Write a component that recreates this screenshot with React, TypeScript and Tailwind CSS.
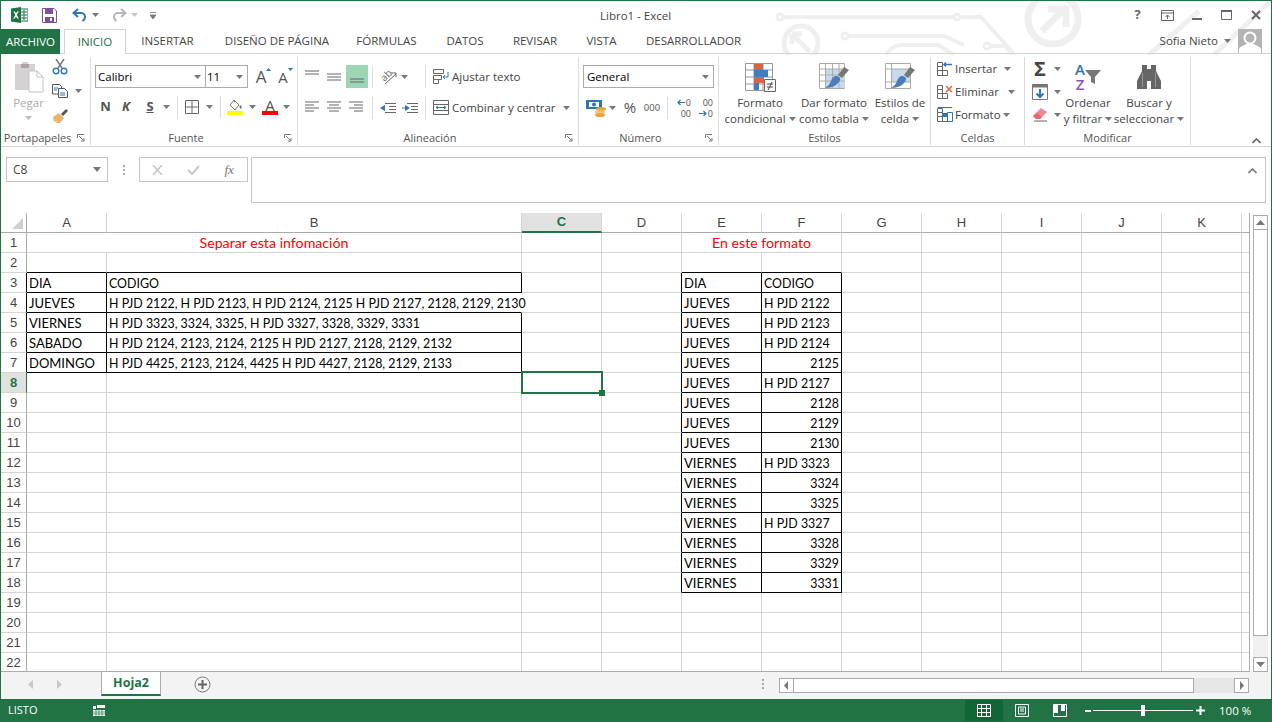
import type { ReactNode } from "react";

function Caret({ className = "" }: { className?: string }) {
  return (
    <svg width="7" height="4" viewBox="0 0 7 4" className={`inline-block shrink-0 ${className}`}>
      <path d="M0 0h7L3.5 4z" fill="#777" />
    </svg>
  );
}

function Launcher() {
  return (
    <svg width="8" height="8" viewBox="0 0 8 8" className="absolute right-[5px] bottom-[3px]">
      <path d="M.5 4V.5H7M2 2l4.5 4.5M4 7h3V4" fill="none" stroke="#777" />
    </svg>
  );
}

function Group({ w, label, launcher, children }: { w: string; label: string; launcher?: boolean; children: ReactNode }) {
  return (
    <div className={`relative flex h-[88px] shrink-0 flex-col border-r border-[#dcdcdc] ${w}`}>
      <div className="h-[72px]">{children}</div>
      <div className={`mt-px h-[15px] text-center text-[11px] leading-[16px] text-[#555] ${launcher ? "pr-[16px]" : ""}`}>{label}</div>
      {launcher && <Launcher />}
    </div>
  );
}

function VDivider() {
  return <div className="h-[22px] w-px shrink-0 bg-[#dcdcdc]" />;
}

function Lines({ kind }: { kind: "top" | "middle" | "bottom" | "left" | "center" | "right" }) {
  const paths = {
    top: "M0 1h14M0 4h14",
    middle: "M0 4h14M0 7h14M0 10h14",
    bottom: "M1 9h14M1 12h14",
    left: "M0 1h14M0 4h9M0 7h14M0 10h9",
    center: "M0 1h14M2 4h10M0 7h14M2 10h10",
    right: "M0 1h14M5 4h9M0 7h14M5 10h9",
  };
  return (
    <svg width="16" height="14" viewBox="0 0 16 14">
      <path d={paths[kind]} stroke="#666" fill="none" />
    </svg>
  );
}

function ExcelLogo() {
  return (
    <svg width="17" height="16" viewBox="0 0 17 16">
      <rect x="7" y="2" width="10" height="12" fill="#fff" stroke="#217346" />
      <path d="M10 5h6M10 8h6M10 11h6M13 3v10" stroke="#217346" />
      <path d="M0 1.5 10 0v16L0 14.5z" fill="#217346" />
      <path d="m2.5 4.5 1.8 3.4-2 3.6h1.6L5 9.3l1.1 2.2h1.7l-2-3.7 1.9-3.3H6.200L5 6.600 3.900 4.500z" fill="#fff" />
    </svg>
  );
}

function SaveIcon() {
  return (
    <svg width="15" height="15" viewBox="0 0 15 15">
      <path d="M.5.5h11.500l2.500 2.500v11.500H.5z" fill="#fff" stroke="#7d4f9d" />
      <path d="M3 1h8v5H3zM3 9h9v6H3z" fill="#7d4f9d" />
      <path d="M8 10h2v3H8z" fill="#fff" />
    </svg>
  );
}

function UndoIcon({ color, flip }: { color: string; flip?: boolean }) {
  return (
    <svg width="15" height="14" viewBox="0 0 15 14" className={flip ? "-scale-x-100" : ""}>
      <path d="M6 1 1.500 5 6 9" fill="none" stroke={color} strokeWidth="2" />
      <path d="M2 5h7.500a3.800 3.800 0 0 1 3.500 4c0 2-1 3-2.500 4" fill="none" stroke={color} strokeWidth="2" />
    </svg>
  );
}

function Circuit() {
  return (
    <svg width="1272" height="54" viewBox="0 0 1272 54" className="pointer-events-none absolute left-0 top-0" fill="none" stroke="#efefef" strokeWidth="4">
      <circle cx="779" cy="16" r="3" strokeWidth="3" />
      <path d="M783 16h172" />
      <circle cx="956" cy="16" r="3" strokeWidth="3" />
      <path d="M960 16h20l34 38" />
      <circle cx="844" cy="35" r="3" strokeWidth="3" />
      <path d="M848 35h95l20 9" />
      <circle cx="986" cy="45" r="3" strokeWidth="3" />
      <path d="M990 45h14l8 9" />
      <path d="M885 54q6-10 16-10h36l16 10" />
      <circle cx="800" cy="42" r="17" strokeWidth="5" />
      <path d="M791 33l18 18M791 33h10M791 33v10" strokeWidth="5" />
      <circle cx="1052" cy="18" r="25" strokeWidth="7" />
      <path d="M1041 30l24-24M1047 8h18v18" strokeWidth="7" />
      <path d="M1148 54l50-44M1213 54l59-56" strokeWidth="5" />
    </svg>
  );
}

function TitleBar() {
  return (
    <div className="relative flex h-[28px] items-center">
      <div className="ml-[10px] flex"><ExcelLogo /></div>
      <div className="ml-[14px] flex"><SaveIcon /></div>
      <div className="ml-[15px] flex"><UndoIcon color="#2e75b5" /></div>
      <Caret className="ml-[5px]" />
      <div className="ml-[13px] flex"><UndoIcon color="#b5b5b5" flip /></div>
      <Caret className="ml-[4px] opacity-40" />
      <svg width="6" height="7" viewBox="0 0 6 7" className="ml-[12px]">
        <path d="M0 .5h6M0 3h6L3 7z" stroke="#777" strokeWidth=".8" fill="#777" />
      </svg>
      <div className="absolute left-[599px] top-[7px] text-[11.500px] leading-[15px] text-[#444]">Libro1 - Excel</div>
      <div className="absolute right-0 top-0 flex h-[28px] items-center text-[#666]">
        <div className="w-[29px] text-center text-[13px] font-bold">?</div>
        <div className="flex w-[30px] justify-center">
          <svg width="13" height="11" viewBox="0 0 13 11">
            <path d="M.5.5h12v10H.5zM.5 3h12M6.500 9V5M4.500 7l2-2 2 2" fill="none" stroke="#666" />
          </svg>
        </div>
        <div className="flex w-[29px] justify-center"><div className="mt-[7px] h-[2px] w-[10px] bg-[#666]" /></div>
        <div className="flex w-[30px] justify-center">
          <svg width="11" height="10" viewBox="0 0 11 10"><path d="M.5 1h10v8.500H.5z" fill="none" stroke="#666" strokeWidth="1" /><path d="M0 0h11v2H0z" fill="#666" /></svg>
        </div>
        <div className="flex w-[29px] justify-center">
          <svg width="10" height="10" viewBox="0 0 10 10"><path d="m1 1 8 8M9 1 1 9" stroke="#666" strokeWidth="2" /></svg>
        </div>
        <div className="w-[1px]" />
      </div>
    </div>
  );
}

const tabs: [string, string][] = [
  ["INSERTAR", "w-[83px]"],
  ["DISEÑO DE PÁGINA", "w-[136px]"],
  ["FÓRMULAS", "w-[83px]"],
  ["DATOS", "w-[74px]"],
  ["REVISAR", "w-[66px]"],
  ["VISTA", "w-[67px]"],
  ["DESARROLLADOR", "w-[117px]"],
];

function TabRow() {
  return (
    <div className="relative flex h-[25px] border-b border-[#d4d4d4] text-[11.500px]">
      <div className="flex h-[25px] w-[59px] items-center justify-center bg-[#217346] text-white">ARCHIVO</div>
      <div className="ml-[4px] flex h-[25px] w-[62px] items-center justify-center border border-b-0 border-[#d4d4d4] bg-white text-[#217346]">INICIO</div>
      {tabs.map(([name, w]) => (
        <div key={name} className={`relative flex h-[24px] items-center justify-center whitespace-nowrap text-[#444] ${w}`}>{name}</div>
      ))}
      <div className="absolute right-[9px] top-0 flex h-[24px] items-center">
        <span className="text-[#444]">Sofia Nieto</span>
        <Caret className="ml-[6px] mr-[7px]" />
        <div className="h-[24px] w-[24px] overflow-hidden bg-[#b3b3b3]">
          <svg width="24" height="24" viewBox="0 0 24 24">
            <circle cx="12" cy="9" r="5.500" fill="#b3b3b3" stroke="#fff" strokeWidth="2" />
            <path d="M1 24v-4c0-2 6-4 7-5h8c1 1 7 3 7 5v4z" fill="#fff" />
          </svg>
        </div>
      </div>
    </div>
  );
}

function Portapapeles() {
  return (
    <Group w="w-[90px]" label="Portapapeles" launcher>
      <div className="flex h-full">
        <div className="-mr-[4px] flex w-[55px] flex-col items-center pt-[4px] text-[#a8a8a8]">
          <svg width="30" height="32" viewBox="0 0 30 32">
            <path d="M1 3h7V1h6v2h7v26H1z" fill="#d6d2d3" />
            <path d="M7 3h8v4H7z" fill="#aaa6a7" />
            <path d="M15 10h8l6 6v15H15z" fill="#fff" stroke="#c2c2c2" />
            <path d="M23 10v6h6" fill="none" stroke="#c2c2c2" />
          </svg>
          <div className="mt-[2px] text-[11.500px] leading-[16px]">Pegar</div>
          <Caret className="mt-[5px] opacity-50" />
        </div>
        <div className="flex flex-col gap-1">
          <div className="flex h-5 items-center">
            <svg width="16" height="16" viewBox="0 0 16 16">
              <path d="m4 0 6 9M12 0 6 9" stroke="#777" strokeWidth="1.500" />
              <circle cx="4" cy="12" r="2.800" fill="none" stroke="#2e75b5" strokeWidth="1.400" />
              <circle cx="12" cy="12" r="2.800" fill="none" stroke="#2e75b5" strokeWidth="1.400" />
            </svg>
          </div>
          <div className="flex h-5 items-center">
            <svg width="16" height="14" viewBox="0 0 16 14">
              <path d="M.5.5h7l2 2V10H.5z" fill="#fff" stroke="#555" />
              <path d="M6.500 4.500h6l3 3v6h-9z" fill="#fff" stroke="#555" />
              <path d="M2 4h4M2 6h3M8 9h5M8 11h5" stroke="#2e75b5" />
            </svg>
            <Caret className="ml-[7px]" />
          </div>
          <div className="flex h-5 items-center">
            <svg width="16" height="15" viewBox="0 0 16 15">
              <path d="m9 6 5-5 2 2-5 5z" fill="#555" />
              <path d="m1 9 6-4 5 5-4 5H4l1-2-3 1z" fill="#e7b66c" />
            </svg>
          </div>
        </div>
      </div>
    </Group>
  );
}

function Fuente() {
  const box = "flex h-[23px] items-center justify-between border border-[#ababab] bg-white text-[11.500px] text-black";
  return (
    <Group w="w-[207px]" label="Fuente" launcher>
      <div className="pl-[4px] pt-[8px]">
        <div className="flex items-center">
          <div className={`${box} w-[111px] pl-[2px] pr-[4px]`}>Calibri<Caret /></div>
          <div className={`${box} -ml-px w-[43px] pl-[1px] pr-[4px]`}>11<Caret /></div>
          <div className="relative ml-[2px] w-[22px] text-center text-[17px] leading-[22px] text-[#555]">
            A
            <svg width="5" height="3" viewBox="0 0 5 3" className="absolute right-[1px] top-[2px]"><path d="M0 3h5L2.500 0z" fill="#2e75b5" /></svg>
          </div>
          <div className="relative w-[22px] text-center text-[15px] leading-[22px] text-[#555]">
            A
            <svg width="5" height="3" viewBox="0 0 5 3" className="absolute right-[1px] top-[2px]"><path d="M0 0h5L2.500 3z" fill="#2e75b5" /></svg>
          </div>
        </div>
        <div className="mt-[7px] flex h-[24px] items-center text-[13px] font-bold text-[#555]">
          <div className="w-[21px] text-center">N</div>
          <div className="w-[20px] text-center italic">K</div>
          <div className="ml-[4px] w-[20px] text-center underline">S</div>
          <div className="flex w-[12px] justify-center"><Caret /></div>
          <div className="ml-[5px]"><VDivider /></div>
          <div className="ml-[4px] flex w-[20px] justify-center">
            <svg width="14" height="14" viewBox="0 0 14 14"><path d="M.5.500h13v13H.5zM7 .500v13M.5 7h13" fill="none" stroke="#666" /></svg>
          </div>
          <div className="ml-[1px] flex w-[12px] justify-center"><Caret /></div>
          <div className="ml-[5px]"><VDivider /></div>
          <div className="ml-[4px] flex w-[20px] flex-col items-center">
            <svg width="16" height="12" viewBox="0 0 16 12">
              <path d="m7 1 5 5-4 5-5-5z" fill="#fff" stroke="#777" />
              <path d="M8 3 6 1" stroke="#777" />
              <path d="M13 6c2 1 2 3 1 4-1-1-2-2-1-4z" fill="#2e75b5" />
            </svg>
            <div className="h-[4px] w-[16px] bg-[#ffff00]" />
          </div>
          <div className="ml-[1px] flex w-[12px] justify-center"><Caret /></div>
          <div className="ml-[2px] flex w-[20px] flex-col items-center">
            <div className="h-[12px] text-[15px] font-normal leading-[12px]">A</div>
            <div className="h-[4px] w-[16px] bg-[#ff0000]" />
          </div>
          <div className="flex w-[12px] justify-center"><Caret /></div>
        </div>
      </div>
    </Group>
  );
}

function Alineacion() {
  return (
    <Group w="w-[281px]" label="Alineación" launcher>
      <div className="pl-[4px] pt-[8px] text-[11.500px] text-[#444]">
        <div className="flex h-[23px] items-center">
          <div className="flex w-[22px] justify-center"><Lines kind="top" /></div>
          <div className="flex w-[22px] justify-center"><Lines kind="middle" /></div>
          <div className="flex h-[23px] w-[22px] items-center justify-center bg-[#9fd5b7]"><Lines kind="bottom" /></div>
          <div className="ml-[4px]"><VDivider /></div>
          <div className="ml-[7px] flex w-[45px] items-center">
            <div className="relative h-[16px] w-[17px]">
              <span className="absolute left-0 top-[0px] -rotate-45 text-[10px] leading-[12px] text-[#666]">ab</span>
              <svg width="17" height="16" viewBox="0 0 17 16" className="absolute left-0 top-0"><path d="m5 15 11-10M11 4h5v4" fill="none" stroke="#666" /></svg>
            </div>
            <Caret className="ml-[4px]" />
          </div>
          <VDivider />
          <div className="ml-[7px] flex w-[16px]">
            <svg width="16" height="15" viewBox="0 0 16 15">
              <path d="M.5.500h10v4H.5zM.5 6.500h8v4H.5zM.5 10.500h5v4H.5z" fill="#fff" stroke="#666" />
              <path d="M15 3v5H10M12 6l-2 2 2 2" fill="none" stroke="#2e75b5" />
            </svg>
          </div>
          <span className="ml-[3px]">Ajustar texto</span>
        </div>
        <div className="mt-[8px] flex h-[23px] items-center">
          <div className="flex w-[22px] justify-center"><Lines kind="left" /></div>
          <div className="flex w-[22px] justify-center"><Lines kind="center" /></div>
          <div className="flex w-[22px] justify-center"><Lines kind="right" /></div>
          <div className="ml-[4px]"><VDivider /></div>
          <div className="ml-[4px] flex w-[22px] justify-center">
            <svg width="16" height="10" viewBox="0 0 16 10"><path d="M5 .500h11M9 3.500h7M9 6.500h7M5 9.500h11" stroke="#666" /><path d="M0 5l5-3v6z" fill="#2e75b5" /></svg>
          </div>
          <div className="flex w-[22px] justify-center">
            <svg width="16" height="10" viewBox="0 0 16 10"><path d="M5 .500h11M9 3.500h7M9 6.500h7M5 9.500h11" stroke="#666" /><path d="M8 5 3 2v6z" fill="#2e75b5" /><path d="M0 5h4" stroke="#2e75b5" /></svg>
          </div>
          <div className="ml-[4px]"><VDivider /></div>
          <div className="ml-[7px] flex w-[16px]">
            <svg width="16" height="15" viewBox="0 0 16 15">
              <path d="M.5.500h15v14H.5zM.5 4.500h15M.5 10.500h15" fill="#fff" stroke="#666" />
              <path d="M3 7.500h10M5 6 3 7.500 5 9M11 6l2 1.500L11 9" fill="none" stroke="#2e75b5" />
            </svg>
          </div>
          <span className="ml-[3px]">Combinar y centrar</span>
          <Caret className="absolute left-[265px]" />
        </div>
      </div>
    </Group>
  );
}

function DecimalIcon({ top, bottom, arrow, row }: { top: string; bottom: string; arrow: string; row: "top" | "bottom" }) {
  const Arrow = (
    <svg width="8" height="7" viewBox="0 0 8 7" className="mr-px">
      <path d={arrow} fill="none" stroke="#2e75b5" strokeWidth="1.200" />
    </svg>
  );
  return (
    <div className="flex w-[16px] flex-col items-end text-[9px] leading-[11px]">
      <div className="flex items-center">{row === "top" && Arrow}{top}</div>
      <div className="flex items-center">{row === "bottom" && Arrow}{bottom}</div>
    </div>
  );
}

function Numero() {
  return (
    <Group w="w-[140px]" label="Número" launcher>
      <div className="pl-[4px] pt-[8px] text-[#555]">
        <div className="flex h-[23px] w-[131px] items-center justify-between border border-[#ababab] pl-[3px] pr-[4px] text-[11.500px] text-black">General<Caret /></div>
        <div className="mt-[8px] flex h-[23px] items-center">
          <div className="ml-[3px] flex w-[21px]">
            <svg width="21" height="18" viewBox="0 0 21 18">
              <path d="M0 1h16v9H0z" fill="#2e75b5" />
              <path d="M3 3h10v5H3z" fill="#fff" />
              <circle cx="8" cy="5.500" r="2" fill="#2e75b5" />
              <ellipse cx="15" cy="10" rx="5" ry="2" fill="#e8a33d" />
              <ellipse cx="14" cy="13" rx="5" ry="2" fill="#f2c27a" />
              <ellipse cx="14" cy="16" rx="5" ry="2" fill="#e8a33d" />
            </svg>
          </div>
          <Caret className="ml-[2px]" />
          <div className="ml-[3px] w-[22px] text-center text-[15px]">%</div>
          <div className="w-[22px] text-center text-[9.500px] leading-[12px]">000</div>
          <div className="ml-[4px]"><VDivider /></div>
          <div className="ml-[7px]"><DecimalIcon top="0" bottom="00" arrow="M8 3.500H1M3.500 1 1 3.500 3.500 6" row="top" /></div>
          <div className="ml-[6px]"><DecimalIcon top="00" bottom="0" arrow="M0 3.500h7M4.500 1 7 3.500 4.500 6" row="bottom" /></div>
        </div>
      </div>
    </Group>
  );
}

function BigButton({ w, icon, lines, ml = "" }: { w: string; icon: ReactNode; lines: [string, string]; ml?: string }) {
  return (
    <div className={`flex shrink-0 flex-col items-center pt-[4px] text-[11.500px] leading-[16px] text-[#444] ${w} ${ml}`}>
      <div className="flex h-[32px] items-center justify-center">{icon}</div>
      <div className="mt-[2px] whitespace-nowrap">{lines[0]}</div>
      <div className="flex items-center whitespace-nowrap">
        {lines[1]}
        <Caret className="ml-[3px]" />
      </div>
    </div>
  );
}

function TableGrid({ children }: { children: ReactNode }) {
  return (
    <svg width="32" height="32" viewBox="0 0 32 32">
      {children}
    </svg>
  );
}

function Brush() {
  return (
    <>
      <path d="m26 6 5 3-7 8-4-3z" fill="#777" />
      <path d="M18 15c2 0 5 2 4 4-2 5-8 8-15 8 3-2 5-4 6-7 1-3 3-5 5-5z" fill="#4a7ebb" />
    </>
  );
}

function Estilos() {
  return (
    <Group w="w-[212px]" label="Estilos">
      <div className="flex pl-[2px]">
        <BigButton
          w="w-[78px]"
          lines={["Formato", "condicional"]}
          icon={
            <TableGrid>
              <path d="M1.500 2.500h27v27h-27zM10 2.500v27M19 2.500v27M1.500 9h27M1.500 16h27M1.500 23h27" fill="#fff" stroke="#999" />
              <path d="M10 3h9v6h-9z" fill="#d9653b" />
              <path d="M10 9h14v7H10z" fill="#3d7ebf" />
              <path d="M10 16h10v6H10z" fill="#d9653b" />
              <path d="M10 22h5v7h-5z" fill="#3d7ebf" />
              <path d="M20.500 18.500h11v12h-11z" fill="#fff" stroke="#666" />
              <path d="M23 23h6M23 26h6M28 21l-4 8" stroke="#444" fill="none" />
            </TableGrid>
          }
        />
        <BigButton
          w="w-[68px]"
          ml="ml-px"
          lines={["Dar formato", "como tabla"]}
          icon={
            <TableGrid>
              <path d="M1.500 2.500h25v25h-25z" fill="#fff" stroke="#aaa" />
              <path d="M7 8h20v19H7z" fill="#c9d9ec" />
              <path d="M1.500 8h25M1.500 14h25M1.500 20h25M7.500 2.500v25M14.500 2.500v25M21 2.500v25" fill="none" stroke="#aaa" />
              <Brush />
            </TableGrid>
          }
        />
        <BigButton
          w="w-[64px]"
          lines={["Estilos de", "celda"]}
          icon={
            <TableGrid>
              <path d="M1.500 2.500h25v25h-25z" fill="#fff" stroke="#aaa" />
              <path d="M7 8h19v13H7z" fill="#c9d9ec" />
              <path d="M7.500 2.500v25M1.500 8h6M1.500 21h25M7.500 8h19" fill="none" stroke="#aaa" />
              <Brush />
            </TableGrid>
          }
        />
      </div>
    </Group>
  );
}

function CellIcon({ mark }: { mark: "insert" | "delete" | "format" }) {
  return (
    <svg width="16" height="16" viewBox="0 0 16 16" className="shrink-0">
      <path d="M.5 1.500h5v4h-5zM.5 5.500h5v4h-5zM.5 9.500h5v5h-5zM5.500 9.500h5v5h-5z" fill="#fff" stroke="#666" />
      {mark === "insert" && <path d="M7 3.500h8M9 1.500l-2 2 2 2" fill="none" stroke="#2e75b5" strokeWidth="1.500" />}
      {mark === "delete" && <path d="m9 2 6 6M15 2 9 8" stroke="#e2663c" strokeWidth="1.500" />}
      {mark === "format" && <path d="M5 6h5v4H5z" fill="#2e75b5" />}
      {mark === "format" && <path d="M1 .5h14M10.500 5.500h5v9h-5z" fill="none" stroke="#2e75b5" />}
    </svg>
  );
}

function Celdas() {
  const rows: ["insert" | "delete" | "format", string, string][] = [
    ["insert", "Insertar", "left-[67px]"],
    ["delete", "Eliminar", "left-[71px]"],
    ["format", "Formato", "left-[66px]"],
  ];
  return (
    <Group w="w-[94px]" label="Celdas">
      <div className="pl-[6px] text-[11.500px] text-[#444]">
        {rows.map(([mark, text, left]) => (
          <div key={text} className="relative flex h-[23px] items-center">
            <CellIcon mark={mark} />
            <span className="ml-[2px]">{text}</span>
            <Caret className={`absolute ${left}`} />
          </div>
        ))}
      </div>
    </Group>
  );
}

function Modificar() {
  return (
    <Group w="w-[166px]" label="Modificar">
      <div className="flex">
        <div className="w-[38px] pl-[7px]">
          <div className="flex h-[23px] items-center">
            <div className="w-[16px] text-center text-[20px] font-bold leading-[20px] text-[#444]">Σ</div>
            <Caret className="ml-[6px]" />
          </div>
          <div className="flex h-[23px] items-center">
            <svg width="16" height="16" viewBox="0 0 16 16"><path d="M.5.500h15v15H.5z" fill="#fff" stroke="#777" /><path d="M.5.500h15v3H.5z" fill="#777" /><path d="M8 5v8M4.500 9.500 8 13l3.500-3.500" fill="none" stroke="#2e75b5" strokeWidth="2" /></svg>
            <Caret className="ml-[6px]" />
          </div>
          <div className="flex h-[23px] items-center">
            <svg width="16" height="14" viewBox="0 0 16 14"><path d="M9 0l6 4-7 7H4L1 8z" fill="#ec8a94" /><path d="m1 8 3 3h4l2-2-5-4z" fill="#e9666f" /><path d="M2 13h13" stroke="#666" /></svg>
            <Caret className="ml-[6px]" />
          </div>
        </div>
        <BigButton
          w="w-[52px]"
          ml="-ml-[1px]"
          lines={["Ordenar", "y filtrar"]}
          icon={
            <div className="flex items-center">
              <div className="flex flex-col text-center text-[15px] font-semibold leading-[15px]">
                <span className="text-[#2e75b5]">A</span>
                <span className="text-[#8d56b5]">Z</span>
              </div>
              <svg width="16" height="14" viewBox="0 0 16 14"><path d="M0 0h16l-6 7v7l-4-2V7z" fill="#777" /></svg>
            </div>
          }
        />
        <BigButton
          w="w-[68px]"
          ml="ml-px"
          lines={["Buscar y", "seleccionar"]}
          icon={
            <svg width="26" height="24" viewBox="0 0 26 24">
              <path d="M6 0h5v4h4V0h5v6l5 10v8H15v-8h-4v8H1v-8L6 6z" fill="#666" />
              <path d="M6.500 8v14M19.500 8v14" stroke="#999" />
            </svg>
          }
        />
      </div>
    </Group>
  );
}

function Ribbon() {
  return (
    <div className="relative flex h-[93px] border-b border-[#d4d4d4] pt-[3px]">
      <Portapapeles />
      <Fuente />
      <Alineacion />
      <Numero />
      <Estilos />
      <Celdas />
      <Modificar />
      <svg width="9" height="6" viewBox="0 0 9 6" className="absolute right-[10px] top-[84px]">
        <path d="m.5 5 4-4 4 4" fill="none" stroke="#666" strokeWidth="1.600" />
      </svg>
    </div>
  );
}

function Dots() {
  return (
    <>
      <div className="h-[2px] w-[2px] bg-[#aaa]" />
      <div className="h-[2px] w-[2px] bg-[#aaa]" />
      <div className="h-[2px] w-[2px] bg-[#aaa]" />
    </>
  );
}

function FormulaBar() {
  return (
    <div className="flex h-[66px] items-start pl-[5px] pt-[10px]">
      <div className="flex h-[25px] w-[102px] items-center justify-between border border-[#c6c6c6] pl-[6px] pr-[6px] text-[12px] text-[#444]">
        C8
        <svg width="8" height="5" viewBox="0 0 8 5"><path d="M0 0h8L4 5z" fill="#777" /></svg>
      </div>
      <div className="flex h-[25px] w-[31px] flex-col items-center justify-center gap-[2px]">
        <Dots />
      </div>
      <div className="flex h-[25px] w-[109px] items-center border border-[#c6c6c6] text-[#777]">
        <div className="flex w-[36px] justify-center">
          <svg width="11" height="10" viewBox="0 0 11 10"><path d="m1 0 9 10M10 0 1 10" stroke="#c8c8c8" strokeWidth="1.600" /></svg>
        </div>
        <div className="flex w-[36px] justify-center">
          <svg width="13" height="10" viewBox="0 0 13 10"><path d="m1 5 4 4 7-8" fill="none" stroke="#c8c8c8" strokeWidth="2" /></svg>
        </div>
        <div className="w-[36px] text-center font-['Liberation_Serif',serif] text-[13px] italic">fx</div>
      </div>
      <div className="ml-[3px] flex h-[46px] w-[1015px] justify-end border border-[#c6c6c6] pr-[8px] pt-[8px]">
        <svg width="9" height="6" viewBox="0 0 9 6" className="mt-[2px]"><path d="m.5 5 4-4 4 4" fill="none" stroke="#777" strokeWidth="1.600" /></svg>
      </div>
    </div>
  );
}

const colWidths = [80, 415, 80, 80, 80, 80, 80, 80, 80, 80, 80, 8];
const colNames = ["A", "B", "C", "D", "E", "F", "G", "H", "I", "J", "K", ""];

type Cell = { text: string; right?: boolean };
const cells: Record<string, Cell> = {
  A3: { text: "DIA" },
  B3: { text: "CODIGO" },
  A4: { text: "JUEVES" },
  B4: { text: "H PJD 2122, H PJD 2123, H PJD 2124, 2125 H PJD 2127, 2128, 2129, 2130" },
  A5: { text: "VIERNES" },
  B5: { text: "H PJD 3323, 3324, 3325, H PJD 3327, 3328, 3329, 3331" },
  A6: { text: "SABADO" },
  B6: { text: "H PJD 2124, 2123, 2124, 2125 H PJD 2127, 2128, 2129, 2132" },
  A7: { text: "DOMINGO" },
  B7: { text: "H PJD 4425, 2123, 2124, 4425 H PJD 4427, 2128, 2129, 2133" },
  E3: { text: "DIA" },
  F3: { text: "CODIGO" },
};
const formatRows: [string, string][] = [
  ["JUEVES", "H PJD 2122"], ["JUEVES", "H PJD 2123"], ["JUEVES", "H PJD 2124"], ["JUEVES", "2125"],
  ["JUEVES", "H PJD 2127"], ["JUEVES", "2128"], ["JUEVES", "2129"], ["JUEVES", "2130"],
  ["VIERNES", "H PJD 3323"], ["VIERNES", "3324"], ["VIERNES", "3325"], ["VIERNES", "H PJD 3327"],
  ["VIERNES", "3328"], ["VIERNES", "3329"], ["VIERNES", "3331"],
];
formatRows.forEach(([day, code], i) => {
  cells[`E${i + 4}`] = { text: day };
  cells[`F${i + 4}`] = { text: code, right: /^\d+$/.test(code) };
});

const inBox = (c: number, r: number) =>
  (c >= 0 && c <= 1 && r >= 3 && r <= 7) || (c >= 4 && c <= 5 && r >= 3 && r <= 18);

function Blank({ w }: { w: string }) {
  return <div className={`h-[20px] shrink-0 border-b border-r border-[#d4d4d4] ${w}`} />;
}

function Merged({ w, text }: { w: string; text: string }) {
  return <div className={`h-[20px] shrink-0 border-b border-r border-[#d4d4d4] text-center text-[14.200px] leading-[20px] text-[#ff0000] ${w}`}>{text}</div>;
}

function SheetRow({ r }: { r: number }) {
  const selected = r === 8;
  return (
    <div className="flex h-[20px] shrink-0">
      <div
        className={`flex h-[20px] w-[26px] shrink-0 items-center justify-center border-b border-r border-b-[#d4d4d4] font-['Liberation_Sans',sans-serif] text-[13px] ${
          selected ? "border-r-[#217346] bg-[#e1e1e1] font-bold text-[#217346]" : inBox(0, r) ? "border-r-black text-[#444]" : "border-r-[#ababab] text-[#444]"
        }`}
      >
        {r}
      </div>
      {r === 1 ? (
        <>
          <Merged w="w-[495px]" text="Separar esta infomación" />
          <Blank w="w-[80px]" />
          <Blank w="w-[80px]" />
          <Merged w="w-[160px]" text="En este formato" />
          {colWidths.slice(6).map((w, i) => (
            <Blank key={i} w={w === 8 ? "w-[8px] border-r-0" : "w-[80px]"} />
          ))}
        </>
      ) : (
        colWidths.map((w, c) => {
          const id = `${colNames[c]}${r}`;
          const cell = cells[id];
          const rightBlack = (inBox(c, r) && id !== "B4") || inBox(c + 1, r);
          const bottomBlack = inBox(c, r) || inBox(c, r + 1);
          const narrow = cell && /\d|CODIGO/.test(cell.text);
          return (
            <div
              key={c}
              style={{ width: w }}
              className={`relative h-[20px] shrink-0 whitespace-nowrap border-b border-r px-[2px] text-black ${narrow ? "text-[12.400px] leading-[21px]" : "text-[13px] leading-[20px]"} ${
                rightBlack ? "border-r-black" : id === "B4" || c === 11 ? "border-r-transparent" : "border-r-[#d4d4d4]"
              } ${bottomBlack ? "border-b-black" : "border-b-[#d4d4d4]"} ${cell?.right ? "text-right" : ""}`}
            >
              {cell?.text}
              {id === "C8" && (
                <div className="absolute -left-px -top-[2px] z-10 h-[23px] w-[82px] border-2 border-[#217346]">
                  <div className="absolute -bottom-[4px] -right-[4px] h-[6px] w-[6px] bg-[#217346]" />
                </div>
              )}
            </div>
          );
        })
      )}
    </div>
  );
}

function ScrollButton({ d }: { d: string }) {
  return (
    <div className="flex h-[15px] w-[15px] shrink-0 items-center justify-center border border-[#ababab] bg-white">
      <svg width="9" height="9" viewBox="0 0 9 9"><path d={d} fill="#777" /></svg>
    </div>
  );
}

function Sheet() {
  const rows = Array.from({ length: 22 }, (_, i) => i + 1);
  return (
    <div className="flex h-[459px]">
      <div className="h-[459px] w-[1249px] overflow-hidden border-b border-r border-[#ababab]">
        <div className="flex h-[20px]">
          <div className="flex h-[20px] w-[26px] shrink-0 items-end justify-end border-b border-r border-[#ababab] pb-[3px] pr-[3px]">
            <svg width="11" height="11" viewBox="0 0 11 11"><path d="M11 0v11H0z" fill="#cfcfcf" /></svg>
          </div>
          {colWidths.map((w, c) =>
            colNames[c] === "C" ? (
              <div key={c} style={{ width: w }} className="h-[20px] shrink-0 border-b-2 border-r border-b-[#217346] border-r-[#d4d4d4] bg-[#e1e1e1] text-center font-['Liberation_Sans',sans-serif] text-[13px] font-bold leading-[18px] text-[#217346]">C</div>
            ) : (
              <div key={c} style={{ width: w }} className={`h-[20px] shrink-0 border-b border-b-[#ababab] text-center font-['Liberation_Sans',sans-serif] text-[13px] leading-[19px] text-[#444] ${c === 11 ? "" : "border-r border-r-[#d4d4d4]"}`}>{colNames[c]}</div>
            )
          )}
        </div>
        <div className="font-['Lato',sans-serif]">
          {rows.map((r) => <SheetRow key={r} r={r} />)}
        </div>
      </div>
      <div className="ml-[3px] flex w-[15px] flex-col pt-[2px]">
        <ScrollButton d="M0 7l4.500-5L9 7z" />
        <div className="-mt-px h-[407px] shrink-0 border border-[#ababab] bg-white" />
        <div className="flex-1 bg-[#f0f0f0]" />
        <ScrollButton d="M0 2l4.500 5L9 2z" />
      </div>
    </div>
  );
}

function SheetTabs() {
  return (
    <div className="flex h-[27px] bg-[#f3f3f3]">
      <div className="flex h-[24px] w-[100px] items-center pl-[26px]">
        <svg width="7" height="9" viewBox="0 0 7 9"><path d="M6 0v9L1 4.500z" fill="#c8c8c8" /></svg>
        <svg width="7" height="9" viewBox="0 0 7 9" className="ml-[22px]"><path d="M1 0v9l5-4.500z" fill="#c8c8c8" /></svg>
      </div>
      <div className="flex h-[24px] w-[60px] items-center justify-center border-x border-b-2 border-x-[#ababab] border-b-[#217346] bg-white text-[12.500px] font-bold text-[#217346]">Hoja2</div>
      <div className="ml-[33px] flex h-[24px] items-center">
        <svg width="17" height="17" viewBox="0 0 17 17"><circle cx="8.500" cy="8.500" r="7.500" fill="none" stroke="#777" /><path d="M8.500 4v9M4 8.500h9" stroke="#666" strokeWidth="2" /></svg>
      </div>
      <div className="ml-[551px] flex h-[24px] flex-col items-center justify-center gap-[2px]">
        <Dots />
      </div>
      <div className="ml-[15px] mt-[6px] flex h-[15px]">
        <ScrollButton d="M6 0v9L2 4.500z" />
        <div className="-ml-px h-[15px] w-[401px] border border-[#ababab] bg-white" />
        <div className="w-[40px] bg-[#e6e6e6]" />
        <ScrollButton d="M3 0v9l4-4.500z" />
      </div>
    </div>
  );
}

function StatusBar() {
  return (
    <div className="flex h-[23px] items-center bg-[#217346] text-[11px] text-white">
      <span className="ml-[7px] w-[84px]">LISTO</span>
      <svg width="14" height="13" viewBox="0 0 14 13">
        <path d="M1 2h3v3H1z" fill="#fff" />
        <path d="M5 1h8v3H5zM1 6h12v6H1z" fill="#fff" />
        <path d="M1 8h12M1 10h12M4 6v6M7 6v6M10 6v6" stroke="#217346" strokeWidth=".7" />
      </svg>
      <div className="ml-[859px] flex h-[21px] w-[38px] items-center justify-center bg-[#0f6636]">
        <svg width="14" height="13" viewBox="0 0 14 13"><path d="M.5.500h13v12H.5zM.5 4.500h13M.5 8.500h13M4.500.500v12M9.500.500v12" fill="none" stroke="#fff" /></svg>
      </div>
      <div className="flex w-[38px] justify-center">
        <svg width="14" height="13" viewBox="0 0 14 13"><path d="M.5.500h13v12H.5zM3.500 3h7v7h-7zM5 5h4M5 7h4" fill="none" stroke="#fff" /></svg>
      </div>
      <div className="flex w-[38px] justify-center">
        <svg width="14" height="13" viewBox="0 0 14 13"><path d="M.5.500h13v12H.5z" fill="none" stroke="#fff" /><path d="M1 1h4v8H1zM8 1h4v6H8z" fill="#fff" /></svg>
      </div>
      <div className="ml-[6px] h-[2px] w-[6px] bg-white" />
      <div className="relative ml-[2px] flex h-[11px] w-[100px] items-center">
        <div className="h-px w-full bg-white" />
        <div className="absolute left-[48px] top-0 h-[11px] w-[4px] bg-white" />
      </div>
      <svg width="9" height="9" viewBox="0 0 9 9" className="ml-[3px]"><path d="M4.500 0v9M0 4.500h9" stroke="#fff" strokeWidth="2" /></svg>
      <span className="ml-[14px] text-[11.500px]">100 %</span>
    </div>
  );
}

export default function App() {
  return (
    <div className="flex h-[722px] w-[1272px] flex-col overflow-hidden border-x border-t border-[#217346] bg-white font-['Open_Sans',sans-serif]">
      <div className="relative">
        <Circuit />
        <TitleBar />
        <TabRow />
      </div>
      <Ribbon />
      <FormulaBar />
      <Sheet />
      <SheetTabs />
      <StatusBar />
    </div>
  );
}
